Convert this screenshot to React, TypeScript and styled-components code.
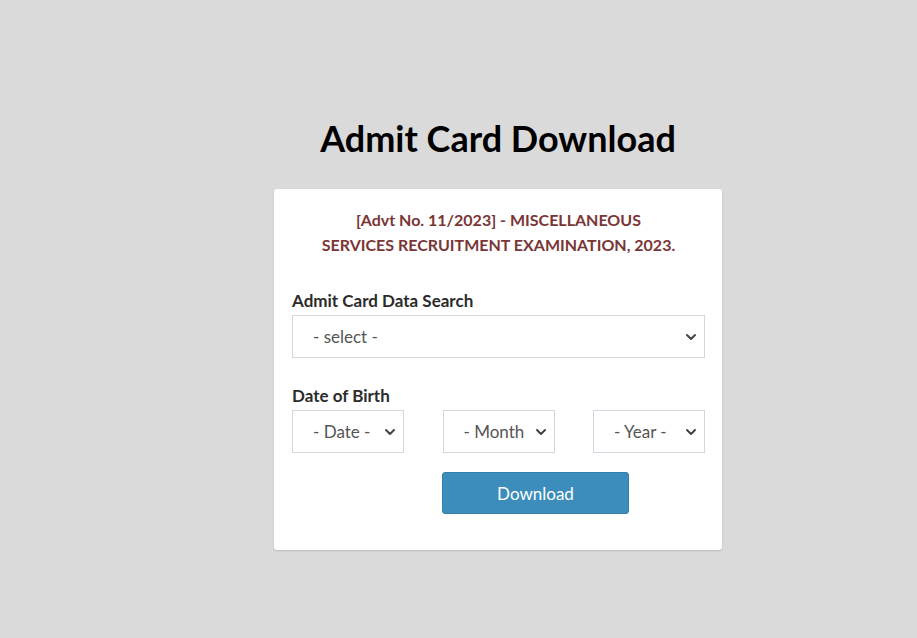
import { FC, ReactNode } from "react";
import styled, { createGlobalStyle } from "styled-components";
import { ChevronDown } from "lucide-react";

const GlobalStyle = createGlobalStyle`
  html, body {
    margin: 0;
    padding: 0;
    background: #dadada;
    font-family: Lato, "Liberation Sans", sans-serif;
  }
  * {
    box-sizing: border-box;
  }
`;

const days = Array.from({ length: 31 }, (_, i) => String(i + 1));
const months = [
  "January", "February", "March", "April", "May", "June",
  "July", "August", "September", "October", "November", "December",
];
const years = Array.from({ length: 40 }, (_, i) => String(2010 - i));

type DropdownProps = { id?: string; placeholder: string; children?: ReactNode };

const Dropdown: FC<DropdownProps> = ({ id, placeholder, children }) => (
  <StSelectWrap>
    <StSelect id={id} defaultValue="">
      <option value="">{placeholder}</option>
      {children}
    </StSelect>
    <StArrow size={16} strokeWidth={3} />
  </StSelectWrap>
);

const App: FC = () => {
  return (
    <>
      <GlobalStyle />
      <StPage>
        <StColumn>
          <StTitle>Admit Card Download</StTitle>
          <StCard>
            <StNotice>
              [Advt No. 11/2023] - MISCELLANEOUS
              <br />
              SERVICES RECRUITMENT EXAMINATION, 2023.
            </StNotice>

            <StField $gap={27}>
              <StLabel htmlFor="exam">Admit Card Data Search</StLabel>
              <Dropdown id="exam" placeholder="- select -" />
            </StField>

            <StField $gap={19}>
              <StLabel>Date of Birth</StLabel>
              <StDobRow>
                <Dropdown placeholder="- Date -">
                  {days.map((d) => (
                    <option key={d}>{d}</option>
                  ))}
                </Dropdown>
                <Dropdown placeholder="- Month -">
                  {months.map((m) => (
                    <option key={m}>{m}</option>
                  ))}
                </Dropdown>
                <Dropdown placeholder="- Year -">
                  {years.map((y) => (
                    <option key={y}>{y}</option>
                  ))}
                </Dropdown>
              </StDobRow>
            </StField>

            <StActions>
              <StButton type="button">Download</StButton>
            </StActions>
          </StCard>
        </StColumn>
      </StPage>
    </>
  );
};

export default App;

const StPage = styled.div`
  min-height: 638px;
  padding: 116px 0 40px 274px;
`;

const StColumn = styled.div`
  width: 448px;
`;

const StTitle = styled.h1`
  margin: 0 0 29px;
  text-align: center;
  font-size: 36px;
  line-height: 44px;
  font-weight: 700;
  color: #000;
`;

const StCard = styled.div`
  background: #fff;
  border-radius: 3px;
  box-shadow: 0 1px 2px rgba(0, 0, 0, 0.15);
  padding: 18px 17px 36px 18px;
`;

const StNotice = styled.p`
  margin: 0 0 33px;
  text-align: center;
  font-size: 16px;
  line-height: 25px;
  font-weight: 700;
  color: #7a3536;
`;

const StField = styled.div<{ $gap: number }>`
  display: flex;
  flex-direction: column;
  margin-bottom: ${(p) => p.$gap}px;
`;

const StLabel = styled.label`
  font-size: 17px;
  line-height: 22px;
  font-weight: 700;
  color: #2b2b2b;
  margin-bottom: 3px;
`;

const StSelectWrap = styled.div`
  position: relative;
  width: 100%;
`;

const StSelect = styled.select`
  appearance: none;
  width: 100%;
  height: 43px;
  padding: 0 27px 0 20px;
  border: 1px solid #d2d6de;
  border-radius: 0;
  background: #fff;
  font-family: inherit;
  font-size: 17px;
  color: #555;
  outline: none;
`;

const StArrow = styled(ChevronDown)`
  position: absolute;
  right: 6px;
  top: 50%;
  transform: translateY(-50%);
  color: #444;
  pointer-events: none;
`;

const StDobRow = styled.div`
  display: grid;
  grid-template-columns: repeat(3, 112px);
  justify-content: space-between;
`;

const StActions = styled.div`
  padding-left: 150px;
`;

const StButton = styled.button`
  width: 187px;
  height: 42px;
  background: #3c8dbc;
  border: 1px solid #367fa9;
  border-radius: 3px;
  color: #fff;
  font-family: inherit;
  font-size: 17px;
  cursor: pointer;
`;
